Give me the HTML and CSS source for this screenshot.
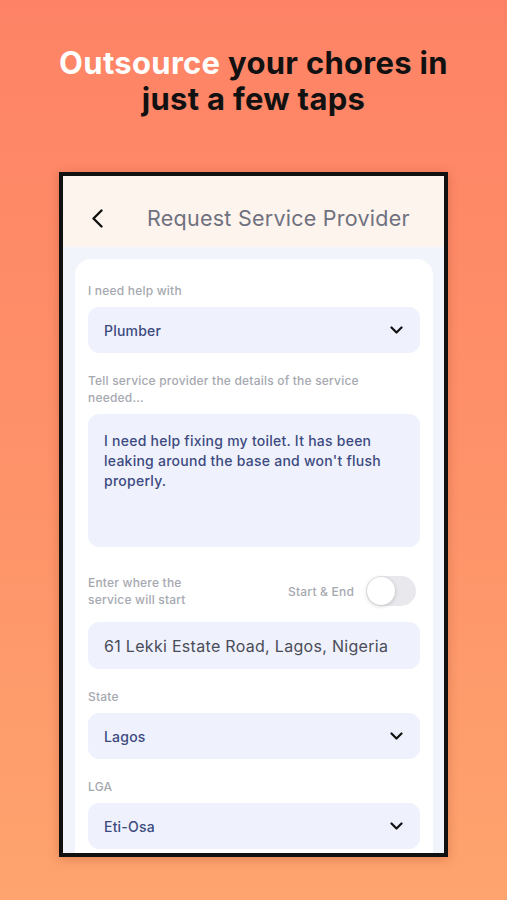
FILE: index.html
```html
<!DOCTYPE html>
<html lang="en">
<head>
    <meta charset="UTF-8">
    <meta name="viewport" content="width=device-width, initial-scale=1.0">
    <title>Request Service Provider</title>
    <link rel="stylesheet" href="styles.css">
</head>
<body>

    <!-- Headline -->
    <h1 class="headline">
        <span class="highlight">Outsource</span> your chores in<br>just a few taps
    </h1>

    <!-- Phone screen -->
    <div class="phone">
        <header class="app-header">
            <svg class="back-icon" width="13" height="19" viewBox="0 0 13 19">
                <path d="M10.5 1.5 L2.5 9.5 L10.5 17.5" fill="none" stroke="#111" stroke-width="2.4" stroke-linecap="round" stroke-linejoin="round"/>
            </svg>
            <span class="app-title">Request Service Provider</span>
        </header>

        <div class="app-body">
            <div class="form-card">
                <label class="field-label">I need help with</label>
                <div class="field select">
                    <span class="value">Plumber</span>
                    <svg class="chevron" width="13" height="8" viewBox="0 0 13 8">
                        <path d="M1.5 1.5 L6.5 6.5 L11.5 1.5" fill="none" stroke="#111" stroke-width="2.2" stroke-linecap="round" stroke-linejoin="round"/>
                    </svg>
                </div>

                <label class="field-label">Tell service provider the details of the service needed...</label>
                <div class="field textarea">
                    I need help fixing my toilet. It has been leaking around the base and won't flush properly.
                </div>

                <div class="location-row">
                    <span class="field-label">Enter where the<br>service will start</span>
                    <div class="toggle-group">
                        <span class="toggle-label">Start &amp; End</span>
                        <div class="toggle"><div class="knob"></div></div>
                    </div>
                </div>

                <div class="field address">61 Lekki Estate Road, Lagos, Nigeria</div>

                <label class="field-label">State</label>
                <div class="field select">
                    <span class="value">Lagos</span>
                    <svg class="chevron" width="13" height="8" viewBox="0 0 13 8">
                        <path d="M1.5 1.5 L6.5 6.5 L11.5 1.5" fill="none" stroke="#111" stroke-width="2.2" stroke-linecap="round" stroke-linejoin="round"/>
                    </svg>
                </div>

                <label class="field-label">LGA</label>
                <div class="field select">
                    <span class="value">Eti-Osa</span>
                    <svg class="chevron" width="13" height="8" viewBox="0 0 13 8">
                        <path d="M1.5 1.5 L6.5 6.5 L11.5 1.5" fill="none" stroke="#111" stroke-width="2.2" stroke-linecap="round" stroke-linejoin="round"/>
                    </svg>
                </div>
            </div>
        </div>
    </div>

</body>
</html>
```

FILE: styles.css
```css
* {
    margin: 0;
    padding: 0;
    box-sizing: border-box;
}

/* Page */
body {
    font-family: Inter, "Noto Sans", sans-serif;
    width: 507px;
    height: 900px;
    overflow: hidden;
    background: linear-gradient(180deg, #fe8366 0%, #fe9169 50%, #fea46e 100%);
}

/* Headline */
.headline {
    padding-top: 45px;
    text-align: center;
    font-size: 31px;
    line-height: 36px;
    font-weight: 700;
    color: #111;
    letter-spacing: 0.3px;
}

.highlight {
    color: #fff;
}

/* Phone frame */
.phone {
    margin: 55px 0 0 59px;
    width: 389px;
    height: 685px;
    border: 4px solid #111;
    overflow: hidden;
    background: #f2f4fb;
    box-shadow: 0 2px 10px rgba(120, 40, 20, 0.25);
}

.app-header {
    height: 71px;
    background: #fdf4ee;
    display: flex;
    align-items: center;
    padding: 13px 0 0 28px;
}

.back-icon {
    margin-right: 43px;
}

.app-title {
    font-size: 21.5px;
    color: #6f717f;
    letter-spacing: 0.25px;
}

/* Form */
.app-body {
    padding: 12px 11px 0 12px;
}

.form-card {
    background: #fff;
    border-radius: 16px;
    padding: 23px 13px 20px 13px;
    height: 640px;
}

.field-label {
    display: block;
    max-width: 290px;
    font-size: 12px;
    font-weight: 500;
    line-height: 17px;
    color: #a6a8b0;
    letter-spacing: 0.2px;
    margin-bottom: 8px;
}

.field-label + .field,
.location-row + .field {
    margin-bottom: 19px;
}

.field {
    background: #eff2fc;
    border-radius: 11px;
    padding: 0 16px;
}

.select {
    height: 46px;
    display: flex;
    align-items: center;
    justify-content: space-between;
    padding-right: 17px;
}

.value {
    font-size: 14px;
    font-weight: 500;
    color: #3d4a80;
    letter-spacing: 0.2px;
}

.textarea {
    height: 133px;
    padding-top: 17px;
    font-size: 14px;
    line-height: 20px;
    color: #3d4a80;
    font-weight: 500;
    letter-spacing: 0.25px;
    margin-bottom: 27px !important;
}

.location-row {
    display: flex;
    justify-content: space-between;
    align-items: center;
    margin-bottom: 14px;
}

.location-row .field-label {
    margin-bottom: 0;
}

.toggle-group {
    display: flex;
    align-items: center;
    gap: 12px;
    padding-right: 4px;
}

.toggle-label {
    font-size: 12px;
    font-weight: 500;
    color: #a6a8b0;
    letter-spacing: 0.2px;
}

.toggle {
    width: 50px;
    height: 30px;
    border-radius: 15px;
    background: #e9e9ed;
    padding: 1px;
}

.knob {
    width: 28px;
    height: 28px;
    border-radius: 50%;
    background: #fff;
    box-shadow: 0 1px 4px rgba(0, 0, 0, 0.2);
}

.address {
    height: 47px;
    display: flex;
    align-items: center;
    font-size: 16px;
    color: #4a4c58;
    letter-spacing: 0.3px;
}
```
